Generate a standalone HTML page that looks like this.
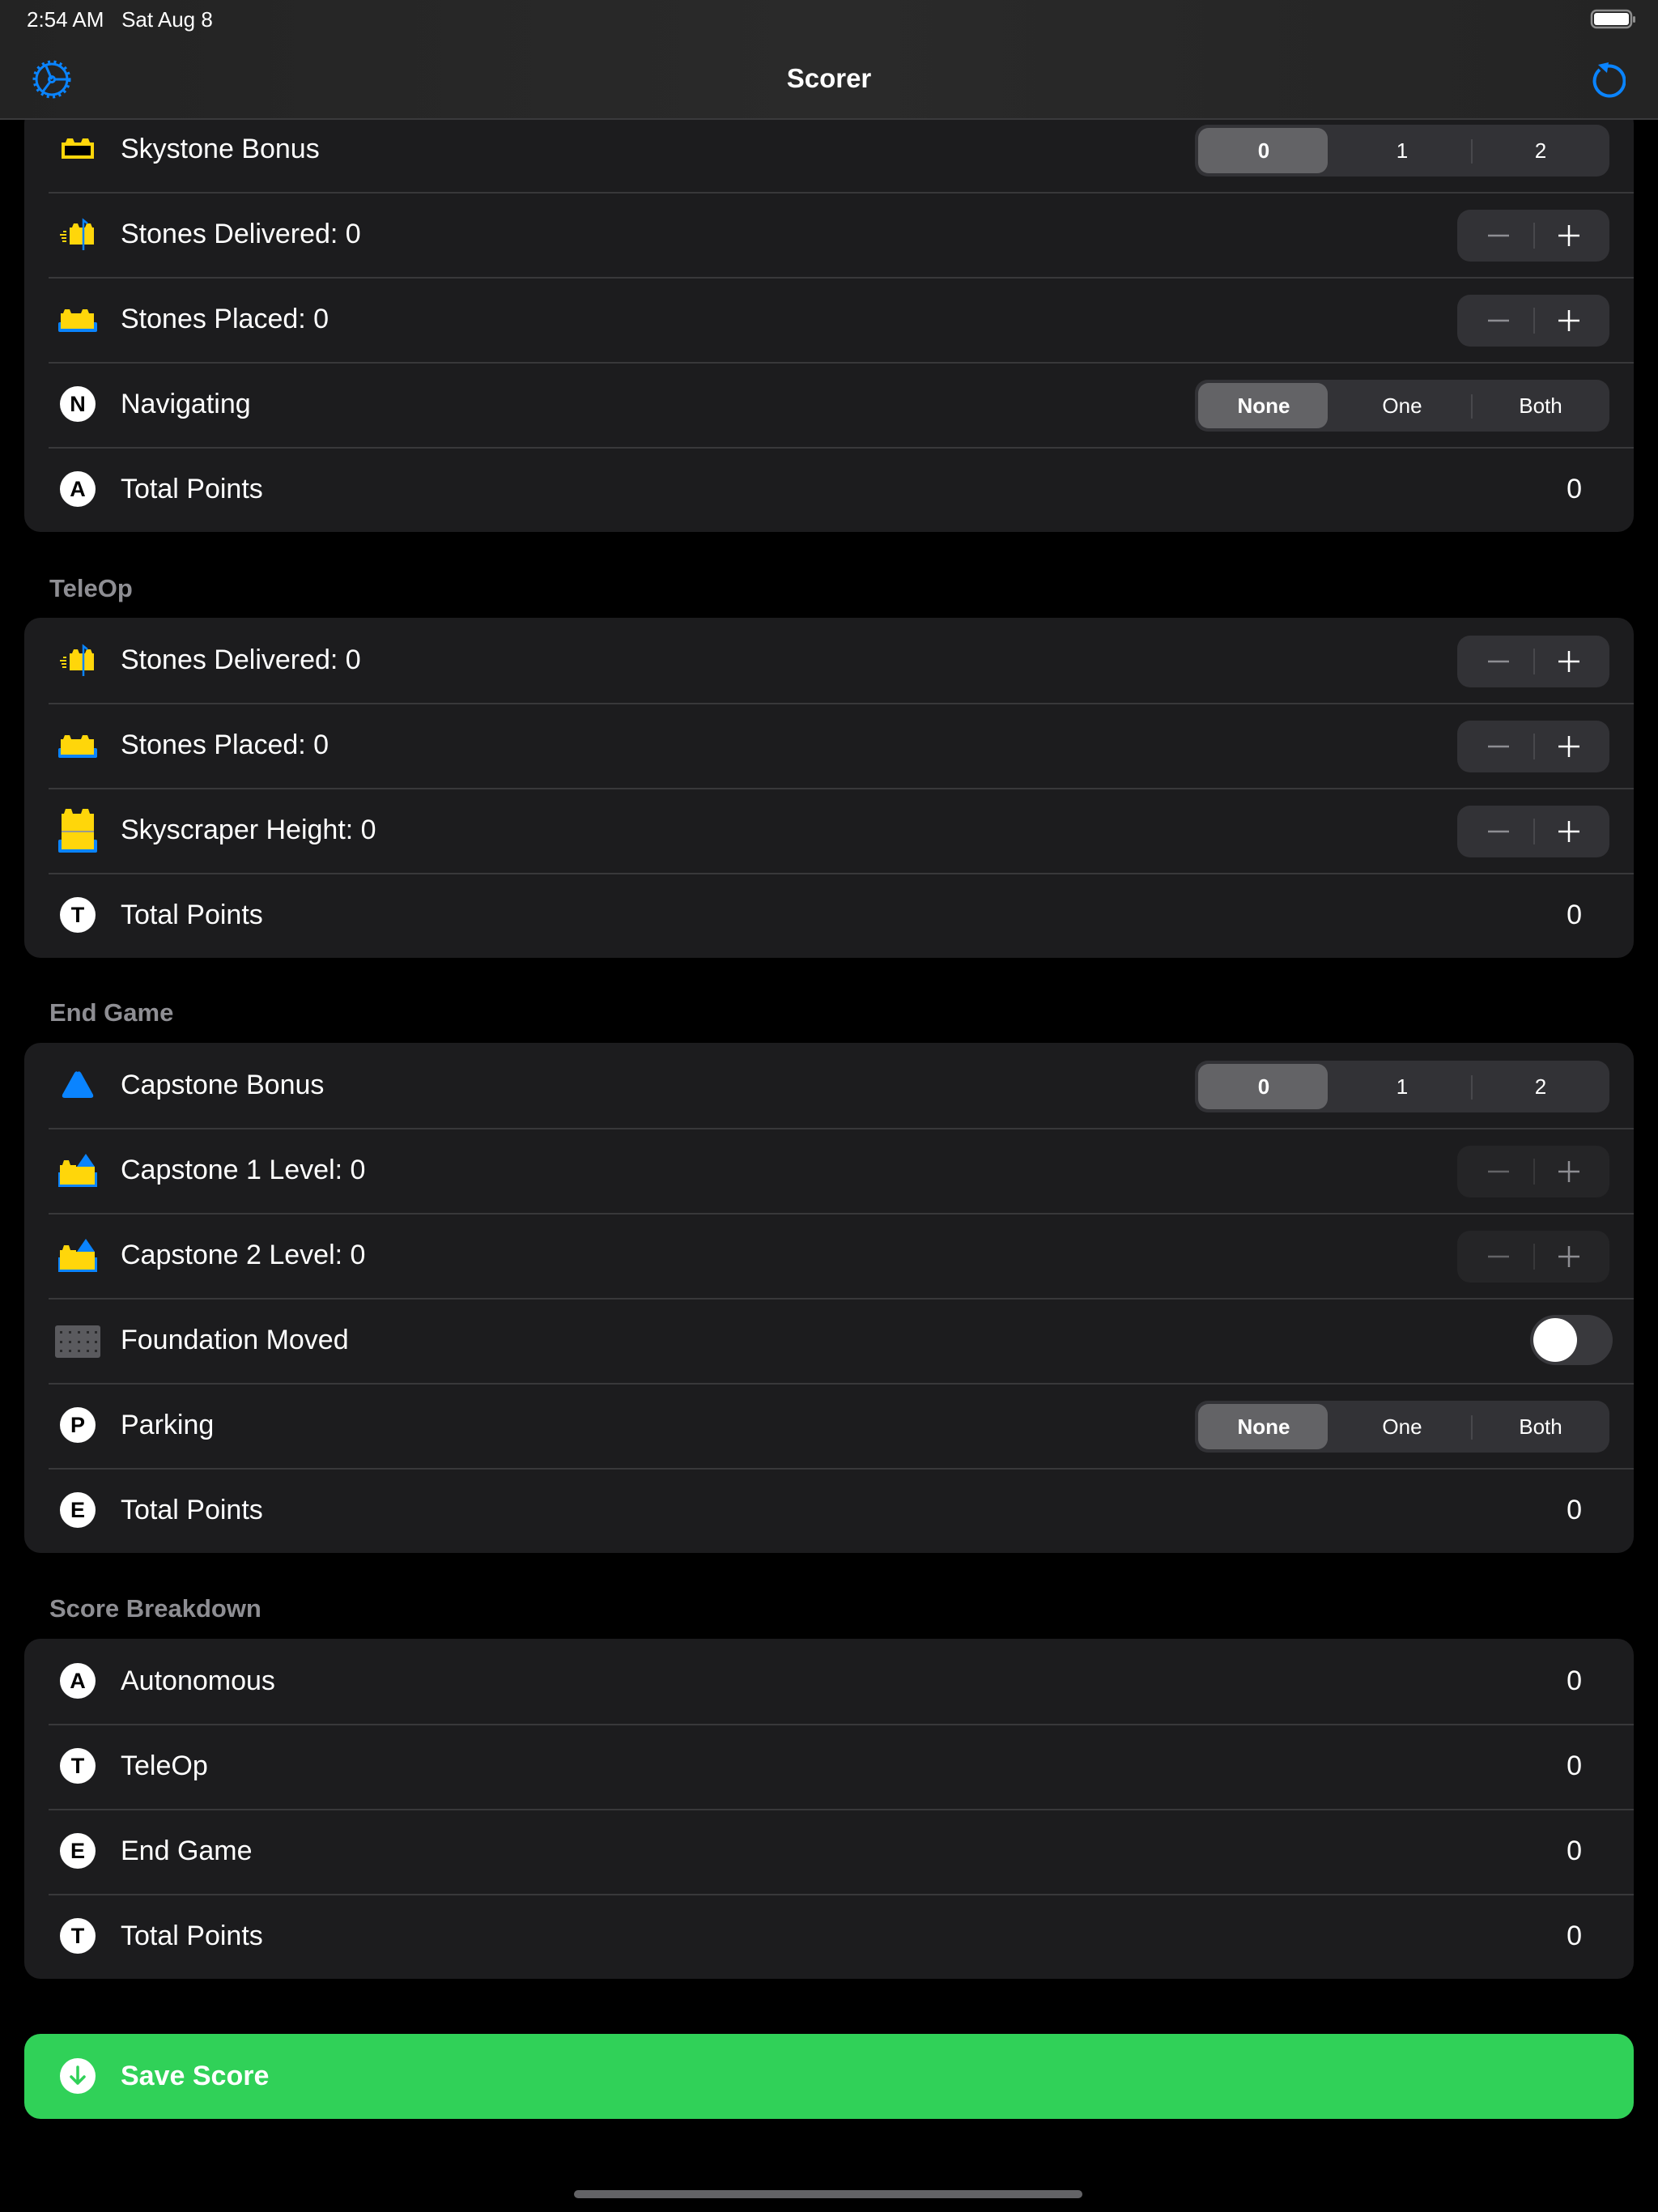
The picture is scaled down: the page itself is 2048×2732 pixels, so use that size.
<!DOCTYPE html>
<html><head><meta charset="utf-8"><style>
*{margin:0;padding:0;box-sizing:border-box}
body{width:2048px;height:2732px;background:#000;position:relative;overflow:hidden;font-family:"Liberation Sans",sans-serif;color:#fff}
.nav{position:absolute;left:0;top:0;width:2048px;height:148px;background:linear-gradient(90deg,#232323,#2a2a2a 50%,#242424);border-bottom:2px solid #3a3a3c;z-index:5}
.card{position:absolute;left:30px;width:1988px;background:#1c1c1e;border-radius:20px;overflow:hidden}
.row{position:relative;height:105px;display:flex;align-items:center}
.row+.row::before{content:"";position:absolute;left:30px;right:0;top:0;height:2px;background:#38383a}
.ic{position:absolute;left:42px;top:28px;width:48px;height:48px}
.lbl{position:absolute;left:119px;font-size:34px;top:33px}
.val{position:absolute;right:64px;font-size:34px;top:33px}
.seg{position:absolute;right:30px;top:22px;width:512px;height:64px;background:#323236;border-radius:16px}
.seg .th{position:absolute;left:4px;top:4px;width:160px;height:56px;background:#636366;border-radius:13px}
.seg span{position:absolute;top:0;width:170px;height:64px;line-height:64px;text-align:center;font-size:26px}
.seg span.sel{font-weight:bold}
.seg .d{position:absolute;left:341px;top:18px;width:2px;height:30px;background:#48484c}
.st{position:absolute;right:30px;top:22px;width:188px;height:64px;background:#323236;border-radius:16px}
.st .d{position:absolute;left:94px;top:16px;width:2px;height:32px;background:#48484c}
.st.dim{background:#252527}
.hdr{position:absolute;left:61px;font-size:31px;font-weight:bold;color:#8e8e93}
.circ{position:absolute;left:44px;top:30px;width:44px;height:44px;border-radius:50%;background:#fff;color:#000;font-weight:bold;font-size:27px;text-align:center;line-height:45px}
</style></head><body>
<div class="nav">
<div style="position:absolute;left:33px;top:9px;font-size:26px">2:54 AM&nbsp;&nbsp;&nbsp;Sat Aug 8</div>
<svg style="position:absolute;left:1964px;top:11px" width="58" height="26"><rect x="2" y="2" width="49" height="21" rx="6" fill="none" stroke="#8e8e8e" stroke-width="2.5"/><rect x="5" y="5" width="43" height="15" rx="3" fill="#fff"/><rect x="53" y="9" width="3" height="8" rx="1.5" fill="#8e8e8e"/></svg>
<svg style="position:absolute;left:38px;top:72px" width="52" height="52" viewBox="0 0 52 52"><g fill="none" stroke="#0a84ff" stroke-width="3"><circle cx="26" cy="26" r="19"/><circle cx="26" cy="26" r="3.5"/><path d="M26 26 L19 10 M29 26 H44 M24 29 L15 41"/></g><g stroke="#0a84ff" stroke-width="4" stroke-dasharray="3 4.4"><circle cx="26" cy="26" r="21.5" fill="none"/></g></svg>
<div style="position:absolute;left:0;width:2048px;top:78px;text-align:center;font-size:33px;font-weight:bold">Scorer</div>
<svg style="position:absolute;left:1960px;top:76px" width="48" height="48" viewBox="0 0 48 48"><path d="M16 10 A18.5 18.5 0 1 0 24 6" fill="none" stroke="#0a84ff" stroke-width="4"/><path d="M16 3 L29 0 L27 13 Z" fill="#0a84ff" transform="translate(-2 1)"/></svg>
</div>

<div class="card" style="top:132px">
<div class="row"><svg class="ic" viewBox="0 0 48 48"><path d="M4 16 H9 L11 11 H18 L20 16 H28 L30 11 H37 L39 16 H44 V36 H4 Z" fill="#ffd60a"/><rect x="8" y="20" width="32" height="12" fill="#000"/></svg><div class="lbl">Skystone Bonus</div><div class="seg"><div class="th"></div><span class="sel" style="left:0">0</span><span style="left:171px">1</span><div class="d"></div><span style="left:342px">2</span></div></div>
<div class="row"><svg class="ic" viewBox="0 0 48 48"><path d="M14 16 H17 L19 11 H24 L26 16 H33 L35 11 H40 L42 16 H44 V37 H14 Z" fill="#ffd60a"/><path d="M2 25 H10 M4 29 H10 M5 33 H10 M6 21 H10" stroke="#ffd60a" stroke-width="2"/><path d="M31 44 V7 L36 11" fill="none" stroke="#0a84ff" stroke-width="2.5"/></svg><div class="lbl">Stones Delivered: 0</div><div class="st"><svg width="188" height="64"><path d="M38 32 H64" stroke="#8e8e93" stroke-width="2.5"/><path d="M125 32 H151 M138 19 V45" stroke="#fff" stroke-width="2.5"/></svg><div class="d"></div></div></div>
<div class="row"><svg class="ic" viewBox="0 0 48 48"><rect x="0" y="28" width="48" height="12" rx="2" fill="#0a84ff"/><path d="M3 17 H6 L8 12 H14 L16 17 H28 L30 12 H36 L38 17 H44 V36 H3 Z" fill="#ffd60a"/></svg><div class="lbl">Stones Placed: 0</div><div class="st"><svg width="188" height="64"><path d="M38 32 H64" stroke="#8e8e93" stroke-width="2.5"/><path d="M125 32 H151 M138 19 V45" stroke="#fff" stroke-width="2.5"/></svg><div class="d"></div></div></div>
<div class="row"><div class="circ">N</div><div class="lbl">Navigating</div><div class="seg"><div class="th"></div><span class="sel" style="left:0">None</span><span style="left:171px">One</span><div class="d"></div><span style="left:342px">Both</span></div></div>
<div class="row"><div class="circ">A</div><div class="lbl">Total Points</div><div class="val">0</div></div>
</div>

<div class="hdr" style="top:709px">TeleOp</div>
<div class="card" style="top:763px">
<div class="row"><svg class="ic" viewBox="0 0 48 48"><path d="M14 16 H17 L19 11 H24 L26 16 H33 L35 11 H40 L42 16 H44 V37 H14 Z" fill="#ffd60a"/><path d="M2 25 H10 M4 29 H10 M5 33 H10 M6 21 H10" stroke="#ffd60a" stroke-width="2"/><path d="M31 44 V7 L36 11" fill="none" stroke="#0a84ff" stroke-width="2.5"/></svg><div class="lbl">Stones Delivered: 0</div><div class="st"><svg width="188" height="64"><path d="M38 32 H64" stroke="#8e8e93" stroke-width="2.5"/><path d="M125 32 H151 M138 19 V45" stroke="#fff" stroke-width="2.5"/></svg><div class="d"></div></div></div>
<div class="row"><svg class="ic" viewBox="0 0 48 48"><rect x="0" y="28" width="48" height="12" rx="2" fill="#0a84ff"/><path d="M3 17 H6 L8 12 H14 L16 17 H28 L30 12 H36 L38 17 H44 V36 H3 Z" fill="#ffd60a"/></svg><div class="lbl">Stones Placed: 0</div><div class="st"><svg width="188" height="64"><path d="M38 32 H64" stroke="#8e8e93" stroke-width="2.5"/><path d="M125 32 H151 M138 19 V45" stroke="#fff" stroke-width="2.5"/></svg><div class="d"></div></div></div>
<div class="row"><svg class="ic" style="top:24px;height:56px" viewBox="0 0 48 56"><rect x="0" y="40" width="48" height="16" rx="2" fill="#0a84ff"/><path d="M4 8 H7 L9 2 H16 L18 8 H28 L30 2 H37 L39 8 H44 V52 H4 Z" fill="#ffd60a"/><rect x="4" y="29" width="40" height="2" fill="#9a9a8e"/></svg><div class="lbl">Skyscraper Height: 0</div><div class="st"><svg width="188" height="64"><path d="M38 32 H64" stroke="#8e8e93" stroke-width="2.5"/><path d="M125 32 H151 M138 19 V45" stroke="#fff" stroke-width="2.5"/></svg><div class="d"></div></div></div>
<div class="row"><div class="circ">T</div><div class="lbl">Total Points</div><div class="val">0</div></div>
</div>

<div class="hdr" style="top:1233px">End Game</div>
<div class="card" style="top:1288px">
<div class="row"><svg class="ic" viewBox="0 0 48 48"><path d="M24 8 Q26 6 28 9 L43 36 Q44 40 40 40 H8 Q4 40 5 36 L20 9 Q22 6 24 8 Z" fill="#0a84ff"/></svg><div class="lbl">Capstone Bonus</div><div class="seg"><div class="th"></div><span class="sel" style="left:0">0</span><span style="left:171px">1</span><div class="d"></div><span style="left:342px">2</span></div></div>
<div class="row"><svg class="ic" viewBox="0 0 48 48"><rect x="-2" y="27" width="52" height="18" rx="2" fill="#0a84ff"/><path d="M2 18 H5 L7 12 H13 L15 18 H22 V20 H45 V42 H2 Z" fill="#ffd60a"/><path d="M34 4 L45 20 H23 Z" fill="#0a84ff"/></svg><div class="lbl">Capstone 1 Level: 0</div><div class="st dim"><svg width="188" height="64"><path d="M38 32 H64" stroke="#636366" stroke-width="2.5"/><path d="M125 32 H151 M138 19 V45" stroke="#8e8e93" stroke-width="2.5"/></svg><div class="d" style="background:#38383a"></div></div></div>
<div class="row"><svg class="ic" viewBox="0 0 48 48"><rect x="-2" y="27" width="52" height="18" rx="2" fill="#0a84ff"/><path d="M2 18 H5 L7 12 H13 L15 18 H22 V20 H45 V42 H2 Z" fill="#ffd60a"/><path d="M34 4 L45 20 H23 Z" fill="#0a84ff"/></svg><div class="lbl">Capstone 2 Level: 0</div><div class="st dim"><svg width="188" height="64"><path d="M38 32 H64" stroke="#636366" stroke-width="2.5"/><path d="M125 32 H151 M138 19 V45" stroke="#8e8e93" stroke-width="2.5"/></svg><div class="d" style="background:#38383a"></div></div></div>
<div class="row"><svg class="ic" style="left:38px;width:56px" viewBox="0 0 56 48"><rect x="0" y="6" width="56" height="40" rx="3" fill="#5a5a5e"/><g fill="#2a2a2c"><rect x="6" y="13" width="3" height="3"/><rect x="17" y="13" width="3" height="3"/><rect x="28" y="13" width="3" height="3"/><rect x="39" y="13" width="3" height="3"/><rect x="49" y="13" width="3" height="3"/><rect x="6" y="25" width="3" height="3"/><rect x="17" y="25" width="3" height="3"/><rect x="28" y="25" width="3" height="3"/><rect x="39" y="25" width="3" height="3"/><rect x="49" y="25" width="3" height="3"/><rect x="6" y="36" width="3" height="3"/><rect x="17" y="36" width="3" height="3"/><rect x="28" y="36" width="3" height="3"/><rect x="39" y="36" width="3" height="3"/><rect x="49" y="36" width="3" height="3"/></g></svg><div class="lbl">Foundation Moved</div><div style="position:absolute;left:1860px;top:21px;width:102px;height:62px;border-radius:31px;background:#39393d"><div style="position:absolute;left:4px;top:4px;width:54px;height:54px;border-radius:50%;background:#fff"></div></div></div>
<div class="row"><div class="circ">P</div><div class="lbl">Parking</div><div class="seg"><div class="th"></div><span class="sel" style="left:0">None</span><span style="left:171px">One</span><div class="d"></div><span style="left:342px">Both</span></div></div>
<div class="row"><div class="circ">E</div><div class="lbl">Total Points</div><div class="val">0</div></div>
</div>

<div class="hdr" style="top:1969px">Score Breakdown</div>
<div class="card" style="top:2024px">
<div class="row"><div class="circ">A</div><div class="lbl">Autonomous</div><div class="val">0</div></div>
<div class="row"><div class="circ">T</div><div class="lbl">TeleOp</div><div class="val">0</div></div>
<div class="row"><div class="circ">E</div><div class="lbl">End Game</div><div class="val">0</div></div>
<div class="row"><div class="circ">T</div><div class="lbl">Total Points</div><div class="val">0</div></div>
</div>

<div style="position:absolute;left:30px;top:2512px;width:1988px;height:105px;background:#30d158;border-radius:20px">
<svg style="position:absolute;left:44px;top:30px" width="44" height="44" viewBox="0 0 44 44"><circle cx="22" cy="22" r="22" fill="#fff"/><path d="M22 11 V31 M14 23 L22 31 L30 23" fill="none" stroke="#30d158" stroke-width="3.5" stroke-linecap="round" stroke-linejoin="round"/></svg>
<div style="position:absolute;left:119px;top:33px;font-size:34px;font-weight:bold">Save Score</div>
</div>
<div style="position:absolute;left:709px;top:2705px;width:628px;height:10px;border-radius:5px;background:#636366"></div>
</body></html>
